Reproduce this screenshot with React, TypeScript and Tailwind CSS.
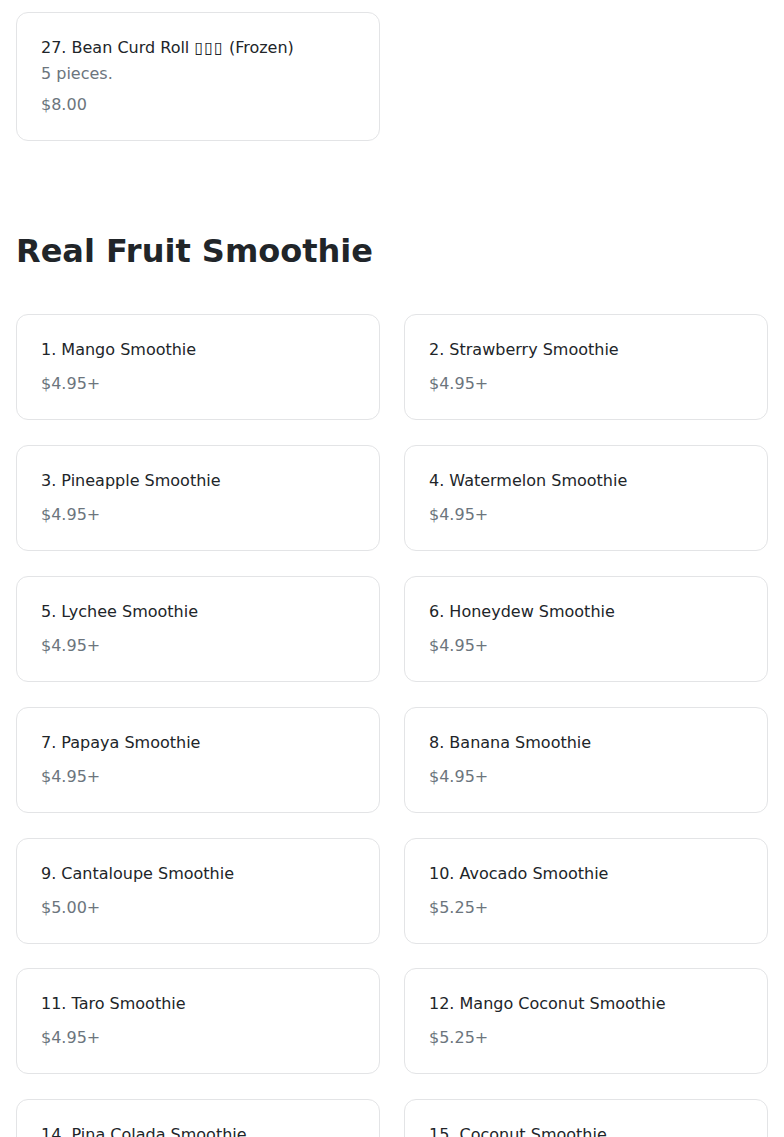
import React from "react"

type Item = {
  name: React.ReactNode
  price: string
  desc?: string
}

const smoothies: Item[] = [
  { name: "1. Mango Smoothie", price: "$4.95+" },
  { name: "2. Strawberry Smoothie", price: "$4.95+" },
  { name: "3. Pineapple Smoothie", price: "$4.95+" },
  { name: "4. Watermelon Smoothie", price: "$4.95+" },
  { name: "5. Lychee Smoothie", price: "$4.95+" },
  { name: "6. Honeydew Smoothie", price: "$4.95+" },
  { name: "7. Papaya Smoothie", price: "$4.95+" },
  { name: "8. Banana Smoothie", price: "$4.95+" },
  { name: "9. Cantaloupe Smoothie", price: "$5.00+" },
  { name: "10. Avocado Smoothie", price: "$5.25+" },
  { name: "11. Taro Smoothie", price: "$4.95+" },
  { name: "12. Mango Coconut Smoothie", price: "$5.25+" },
  { name: "14. Pina Colada Smoothie", price: "$4.95+" },
  { name: "15. Coconut Smoothie", price: "$4.95+" },
]

function MenuCard({ name, price, desc }: Item) {
  return (
    <div className="rounded-xl border border-[#e3e4e6] bg-white pt-[23px] pb-[23px] px-6">
      <div className="leading-6 text-[#212529]">{name}</div>
      {desc && <div className="mt-[2px] leading-6 text-[#6c757d]">{desc}</div>}
      <div className={`leading-6 text-[#6c757d] ${desc ? "mt-[7px]" : "mt-[10px]"}`}>{price}</div>
    </div>
  )
}

export default function App() {
  return (
    <div
      className="min-h-screen bg-white px-4 text-base"
      style={{ fontFamily: '"DejaVu Sans", sans-serif' }}
    >
      <div className="grid grid-cols-2 gap-x-6 pt-3">
        <MenuCard
          name={
            <>
              27. Bean Curd Roll <span className="tracking-[1px]">▯▯▯</span> (Frozen)
            </>
          }
          desc="5 pieces."
          price="$8.00"
        />
      </div>

      <section className="pt-[91px]">
        <h2 className="mb-[44px] text-[32px] font-bold leading-[1.2] text-[#212529]">
          Real Fruit Smoothie
        </h2>
        <div className="grid grid-cols-2 gap-x-6 gap-y-[24.8px]">
          {smoothies.map((item, i) => (
            <MenuCard key={i} name={item.name} price={item.price} />
          ))}
        </div>
      </section>
    </div>
  )
}
